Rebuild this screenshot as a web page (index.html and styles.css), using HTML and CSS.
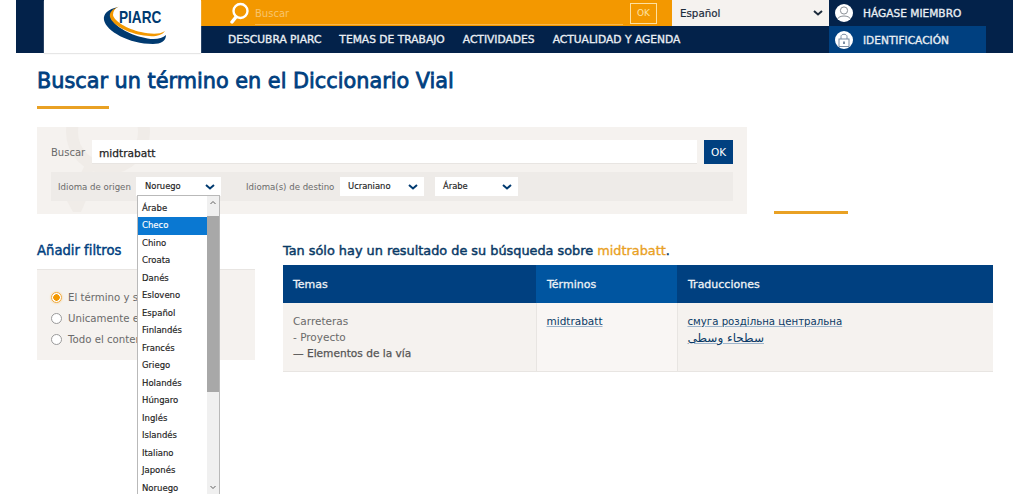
FILE: index.html
```html
<!DOCTYPE html>
<html lang="es">
<head>
<meta charset="utf-8">
<title>Buscar un término en el Diccionario Vial</title>
<link rel="stylesheet" href="styles.css">
</head>
<body>
<header class="header">
  <div class="hd-edge"></div>
  <a class="logo">
    <svg class="logo-swoosh" width="66" height="40" viewBox="0 0 66 40">
      <path d="M15 1 C5 3 0 8 1 14 C3 25 26 38 50 38 C58 38 63 35 63 29 C58 34 48 34 38 31 C22 27 8 17 8 10 C8 6 11 3 15 1Z" fill="#003a70"/>
      <path d="M16 0.5 C9 3 6 7 7 11 C9 18 22 26 38 29 C48 31 58 31 62 25 C56 29 47 28 38 26 C24 23 11 15 10 9 C10 5 12 2 16 0.5Z" fill="#f39800"/>
    </svg>
    <span class="logo-text">PIARC</span>
  </a>
  <div class="hd-main">
    <div class="hd-top">
      <div class="hd-search">
        <svg class="lens" width="20" height="23" viewBox="0 0 20 23">
          <circle cx="10.5" cy="9" r="7" fill="none" stroke="#fff" stroke-width="2.4"/>
          <path d="M6 15 L2 20" stroke="#fff" stroke-width="3.4" stroke-linecap="round"/>
        </svg>
        <span class="hd-search-field">Buscar</span>
        <span class="hd-ok">OK</span>
      </div>
      <div class="hd-lang"><span>Español</span><svg class="chev" width="10" height="6" viewBox="0 0 10 6"><path d="M1 1 L5 4.5 L9 1" fill="none" stroke="#1c2a3a" stroke-width="2"/></svg></div>
      <div class="hd-user">
        <span class="round-ic"><svg width="18" height="18" viewBox="0 0 18 18"><circle cx="9" cy="6.5" r="3.6" fill="none" stroke="#8a8f96"/><path d="M2.5 15 C4 11 14 11 15.5 15" fill="none" stroke="#8a8f96"/></svg></span>
        <span>HÁGASE MIEMBRO</span>
      </div>
    </div>
    <div class="hd-bottom">
      <nav class="nav">
        <a>DESCUBRA PIARC</a><a>TEMAS DE TRABAJO</a><a>ACTIVIDADES</a><a>ACTUALIDAD Y AGENDA</a>
      </nav>
      <div class="hd-login">
        <span class="round-ic"><svg width="18" height="18" viewBox="0 0 18 18"><rect x="4" y="8" width="10" height="7.5" fill="none" stroke="#7d8ea3"/><path d="M6 8 V5.5 C6 2.5 12 2.5 12 5.5 V8" fill="none" stroke="#7d8ea3"/><rect x="8" y="10.5" width="2" height="2.5" fill="#7d8ea3"/></svg></span>
        <span>IDENTIFICACIÓN</span>
      </div>
      <div class="hd-rest"></div>
    </div>
  </div>
</header>

<main class="main">
  <h1 class="title">Buscar un término en el Diccionario Vial</h1>
  <div class="rule"></div>

  <div class="search-row">
    <form class="panel">
      <svg class="watermark" width="110" height="87" viewBox="0 0 110 87">
        <circle cx="51" cy="5" r="36" fill="none" stroke="#f0ece8" stroke-width="12"/>
        <path d="M28 38 L10 74 L16 85 L24 85 L40 48Z" fill="#f0ece8"/>
      </svg>
      <div class="panel-line">
        <label class="panel-label">Buscar</label>
        <div class="panel-input">midtrabatt</div>
        <button type="button" class="panel-ok">OK</button>
      </div>
      <div class="panel-band">
        <span class="band-label band-label-src">Idioma de origen</span>
        <span class="sel sel-src"><span class="sel-text">Noruego</span><svg class="chev" width="10" height="6" viewBox="0 0 10 6"><path d="M1 1 L5 4.5 L9 1" fill="none" stroke="#003a70" stroke-width="2"/></svg></span>
        <span class="band-label band-label-dst">Idioma(s) de destino</span>
        <span class="sel sel-uk"><span class="sel-text">Ucraniano</span><svg class="chev" width="10" height="6" viewBox="0 0 10 6"><path d="M1 1 L5 4.5 L9 1" fill="none" stroke="#003a70" stroke-width="2"/></svg></span>
        <span class="sel sel-ar"><span class="sel-text">Árabe</span><svg class="chev" width="10" height="6" viewBox="0 0 10 6"><path d="M1 1 L5 4.5 L9 1" fill="none" stroke="#003a70" stroke-width="2"/></svg></span>
      </div>
      <div class="listbox">
        <ul class="options">
          <li>Árabe</li><li class="on">Checo</li><li>Chino</li><li>Croata</li><li>Danés</li><li>Esloveno</li><li>Español</li><li>Finlandés</li><li>Francés</li><li>Griego</li><li>Holandés</li><li>Húngaro</li><li>Inglés</li><li>Islandés</li><li>Italiano</li><li>Japonés</li><li>Noruego</li>
        </ul>
        <div class="scroll">
          <svg class="scroll-arrow" width="12" height="20" viewBox="0 0 12 20"><path d="M3.5 8 L6 5.5 L8.5 8" fill="none" stroke="#606060"/></svg>
          <div class="scroll-thumb"></div>
          <svg class="scroll-arrow scroll-arrow-b" width="12" height="20" viewBox="0 0 12 20"><path d="M3.5 12 L6 14.5 L8.5 12" fill="none" stroke="#606060"/></svg>
        </div>
      </div>
    </form>
    <div class="rule rule-side"></div>
  </div>

  <div class="columns">
    <aside class="filters">
      <h2 class="filters-title">Añadir filtros</h2>
      <div class="filters-box">
        <div class="radio-row"><span class="radio radio-on"></span><span class="radio-text">El término y su</span></div>
        <div class="radio-row"><span class="radio"></span><span class="radio-text">Unicamente el</span></div>
        <div class="radio-row"><span class="radio"></span><span class="radio-text">Todo el conten</span></div>
      </div>
    </aside>
    <section class="results">
      <h2 class="results-title">Tan sólo hay un resultado de su búsqueda sobre <em>midtrabatt</em>.</h2>
      <table class="table">
        <thead>
          <tr><th class="c1">Temas</th><th class="c2">Términos</th><th class="c3">Traducciones</th></tr>
        </thead>
        <tbody>
          <tr>
            <td class="c1">Carreteras<br>- Proyecto<br><b>— Elementos de la vía</b></td>
            <td class="c2"><a>midtrabatt</a></td>
            <td class="c3"><a class="cyr">смуга роздільна центральна</a><br><a class="arabic" lang="ar">سطحاء وسطى</a></td>
          </tr>
        </tbody>
      </table>
    </section>
  </div>
</main>
</body>
</html>
```
FILE: styles.css
```css
* { box-sizing: border-box; }
html, body { margin: 0; height: 494px; overflow: hidden; }
body { background: #fff; font-family: "DejaVu Sans", sans-serif; font-size: 11px; color: #222; }

.header { display: flex; height: 53px; margin: 0 11px 0 16px; background: #03224a; }
.hd-edge { width: 28px; }
.logo { position: relative; width: 157px; background: #fff; display: block; box-shadow: 0 1px 1px #e6e6e6; }
.logo-swoosh { position: absolute; left: 59px; top: 6px; }
.logo-text { position: absolute; left: 75px; top: 6px; font: 700 17px/24px "Liberation Sans", sans-serif; color: #003a70; transform: scaleX(.8); transform-origin: left center; }
.hd-main { flex: 1; display: flex; flex-direction: column; }
.hd-top { height: 26px; display: flex; }
.hd-bottom { height: 27px; display: flex; }

.hd-search { width: 471px; background: #f39800; display: flex; align-items: center; padding-left: 29px; }
.lens { margin-right: 5px; flex: none; }
.hd-search-field { width: 368px; height: 24px; border-bottom: 1px solid #f7b64a; color: #f8c46c; font-size: 10px; line-height: 26px; }
.hd-ok { width: 27px; height: 21px; margin-left: 7px; border: 1px solid #fde0a0; color: #fde0a0; font-size: 9px; line-height: 19px; text-align: center; }
.hd-lang { width: 157px; background: #f5f2ef; display: flex; align-items: center; justify-content: space-between; padding: 0 6px 0 8px; font-size: 10.3px; color: #1c2a3a; -webkit-text-stroke: 0.2px #1c2a3a; }
.hd-user, .hd-login { display: flex; align-items: center; padding-left: 6px; color: #e9eef3; font-size: 10.6px; -webkit-text-stroke: 0.35px #e9eef3; }
.hd-user { flex: 1; }
.hd-login { width: 157px; background: #004080; }
.hd-rest { flex: 1; }
.round-ic { width: 18px; height: 18px; border-radius: 50%; background: #fff; margin-right: 10px; display: block; overflow: hidden; flex: none; }
.round-ic svg { display: block; }
.nav { width: 628px; display: flex; gap: 18px; padding-left: 27px; align-items: center; }
.nav a { color: #e9eef3; font-size: 10.7px; -webkit-text-stroke: 0.35px #e9eef3; white-space: nowrap; }

.main { padding: 0 31px 0 37px; }
.title { margin: 15px 0 0; font-size: 20.8px; line-height: 27px; font-weight: 400; -webkit-text-stroke: 0.8px #004080; color: #004080; white-space: nowrap; }
.rule { width: 72px; height: 3px; background: #e9a124; margin-top: 11px; }

.search-row { display: flex; align-items: flex-end; margin-top: 18px; }
.rule-side { margin: 0 0 0 27px; width: 74px; }
.panel { position: relative; width: 710px; height: 87px; background: #f5f2ef; padding: 13px 14px 0; overflow: visible; }
.watermark { position: absolute; left: 20px; top: 0; }
.panel-line { position: relative; display: flex; align-items: center; height: 24px; }
.panel-label { width: 41px; color: #6a6a6a; font-size: 10px; padding-top: 1px; }
.panel-input { width: 605px; height: 24px; background: #fff; border-bottom: 1px solid #e8e5e2; padding-left: 7px; font-size: 10.6px; line-height: 27px; color: #222; -webkit-text-stroke: 0.25px #222; }
.panel-ok { width: 29px; height: 24px; margin-left: 7px; padding: 0; border: 0; background: #004080; color: #fff; font: 10.5px "DejaVu Sans", sans-serif; }
.panel-band { position: relative; display: flex; align-items: center; height: 29px; margin-top: 8px; background: #eeebe8; }
.band-label { color: #6a6a6a; font-size: 8.6px; white-space: nowrap; }
.band-label-src { width: 78px; margin-left: 7px; }
.band-label-dst { width: 94px; margin-left: 25px; }
.sel { height: 19px; background: #fff; display: flex; align-items: center; justify-content: space-between; padding: 0 6px 0 8px; font-size: 8.4px; color: #222; -webkit-text-stroke: 0.15px #222; }
.sel-text { margin-top: -2px; }
.sel-src { width: 85px; padding-left: 9px; }
.sel-uk { width: 84px; }
.sel-ar { width: 83px; margin-left: 11px; }

.listbox { position: absolute; left: 100px; top: 68px; width: 83px; height: 299px; display: flex; background: #fff; border: 1px solid #b9b9b9; border-bottom: 0; z-index: 2; overflow: hidden; }
.options { flex: 1; margin: 0; padding: 3.5px 0 0; list-style: none; }
.options li { height: 17.5px; line-height: 17.5px; padding-left: 4px; font-size: 8.5px; color: #222; white-space: nowrap; -webkit-text-stroke: 0.15px #222; }
.options li.on { background: #0a78d2; color: #fff; -webkit-text-stroke: 0.15px #fff; }
.scroll { width: 12px; background: #f0f0f0; display: flex; flex-direction: column; }
.scroll-arrow { flex: none; height: 20px; display: block; }
.scroll-thumb { height: 176px; background: #a8a8a8; }
.scroll-arrow-b { margin-top: auto; }

.columns { display: flex; margin-top: 28px; }
.filters { width: 218px; margin-right: 28px; }
.filters-title { margin: 0; font-size: 13.2px; line-height: 18px; font-weight: 400; color: #004080; -webkit-text-stroke: 0.45px #004080; }
.filters-box { height: 91px; margin-top: 9px; padding-top: 17px; background: #f5f2ef; border-top: 1px solid #e8e5e2; overflow: hidden; }
.radio-row { display: flex; align-items: center; height: 21px; padding-left: 14px; color: #6a6a6a; font-size: 10.2px; white-space: nowrap; }
.radio { width: 11px; height: 11px; border: 1px solid #9a9a9a; border-radius: 50%; background: #fff; margin-right: 6px; flex: none; }
.radio-on { border-color: #f0a93c; background: radial-gradient(circle, #f39800 0 3px, #fff 3.5px); box-shadow: 0 0 2px #f6c67a; }

.results { width: 710px; }
.results-title { margin: 0; font-size: 12.85px; line-height: 18px; font-weight: 400; color: #0a3a66; -webkit-text-stroke: 0.45px #0a3a66; white-space: nowrap; }
.results-title em { font-style: normal; color: #e9a124; -webkit-text-stroke: 0.35px #e9a124; }
.table { width: 710px; margin-top: 5px; border-collapse: collapse; table-layout: fixed; }
.table th { height: 38px; padding: 0 11px 0 10px; text-align: left; font-size: 11px; font-weight: 400; color: #eef2f6; -webkit-text-stroke: 0.3px #eef2f6; background: #004080; }
.table th.c2 { background: #0055a0; padding-left: 11px; }
.table th.c3 { padding-left: 11px; }
.table td { height: 68px; padding: 10px 11px 0 10px; vertical-align: top; background: #f5f2ef; border-bottom: 1px solid #e8e5e2; font-size: 10.5px; line-height: 16px; color: #6a6a6a; }
.table td b { font-size: 10.6px; font-weight: 400; color: #555; -webkit-text-stroke: 0.25px #555; }
.table td.c2 { background: #f9f6f4; border-left: 1px solid #e8e5e2; border-right: 1px solid #e8e5e2; }
.table a { color: #0a3a66; text-decoration: underline; text-decoration-color: #9db4cb; }
.cyr { font-size: 10.2px; }
.arabic { font-size: 12px; }
.c1 { width: 253px; }
.c2 { width: 141px; }
.c3 { width: 316px; }
```
